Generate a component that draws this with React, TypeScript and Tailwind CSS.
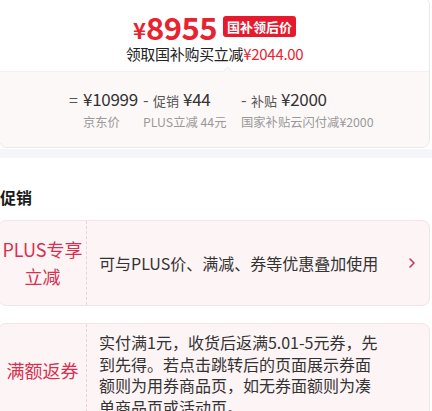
const font = { fontFamily: '"Noto Sans CJK SC", "Noto Sans", sans-serif' };

function PriceCol({ op, label, value, sub, opW, w }: { op: string; label?: string; value: string; sub: string; opW: string; w: string }) {
  return (
    <div className={`flex flex-col ${w}`}>
      <div className="flex items-baseline h-[24px] text-[#333]">
        <span className={`text-[16px] text-[#555] ${opW}`}>{op}</span>
        {label && <span className="text-[13px] text-[#555] mr-[4px]">{label}</span>}
        <span className="text-[17px] tracking-[-0.3px]">{value}</span>
      </div>
      <div className={`text-[12.3px] text-[#999] leading-[20px] mt-[2px] whitespace-nowrap ${opW}`}>{sub}</div>
    </div>
  );
}

export default function App() {
  return (
    <div style={font} className="w-[432px] h-[411px] overflow-hidden bg-white">
      {/* price card */}
      <div className="-ml-px -mt-[3px] w-[431px] border border-[#ebe8e8] rounded-tr-[8px] rounded-b-[8px] overflow-hidden">
        <div className="h-[73px] flex flex-col items-center bg-white">
          <div className="flex items-center mt-[13px] h-[31px]">
            <span className="text-[#e8232f] text-[22px] font-semibold leading-none mt-[4px]">¥</span>
            <span className="text-[#e8232f] text-[31px] font-semibold leading-none tracking-[-0.5px]">8955</span>
            <span className="ml-[6px] bg-[#e8192c] text-white text-[13px] font-bold leading-[21px] px-[4px] rounded-[3px]">国补领后价</span>
          </div>
          <div className="mt-[2px] text-[15px] leading-[20px] text-[#222] tracking-[-0.3px]">
            领取国补购买立减<span className="text-[#e8232f]">¥2044.00</span>
          </div>
        </div>
        <div className="relative h-[76px] bg-[#fdf8f8] border-t border-[#f6eeee] flex pt-[14px] pl-[69px]">
          <div className="absolute -top-[4px] left-[224px] w-[7px] h-[7px] rotate-45 bg-[#fdf8f8] border-l border-t border-[#f6eeee]" />
          <PriceCol op="=" value="¥10999" sub="京东价" opW="pl-[14px] first:pl-0 w-[14px]" w="w-[74px]" />
          <PriceCol op="-" label="促销" value="¥44" sub="PLUS立减 44元" opW="w-[10px]" w="w-[98px]" />
          <PriceCol op="-" label="补贴" value="¥2000" sub="国家补贴云闪付减¥2000" opW="w-[10px]" w="w-[150px]" />
        </div>
      </div>

      <div className="h-[9px] bg-[#f5f6fa] mt-[1px]" />

      <div className="h-[62px] pt-[28px]">
        <h2 className="text-[16px] font-bold leading-[22px] text-[#1a1a1a]">促销</h2>
      </div>

      {/* promo cards */}
      <div className="-ml-[2px] w-[432px] flex flex-col gap-[17px]">
        <div className="flex h-[86px] bg-[#fdf4f5] border border-[#f3e4e7] rounded-[8px]">
          <div className="w-[88px] shrink-0 flex items-center justify-center border-r border-dashed border-[#ead3d8] text-center text-[#d9304f] text-[18px] leading-[27px]">
            PLUS专享<br />立减
          </div>
          <div className="flex-1 flex items-center pl-[12px] text-[16px] text-[#333]">可与PLUS价、满减、券等优惠叠加使用</div>
          <div className="w-[34px] flex items-center justify-center text-[#c8365a]">
            <svg width="8" height="12" viewBox="0 0 8 12" fill="none">
              <path d="M2 2l4 4-4 4" stroke="currentColor" strokeWidth="1.6" strokeLinecap="round" strokeLinejoin="round" />
            </svg>
          </div>
        </div>
        <div className="flex h-[110px] bg-[#fdf4f5] border border-[#f3e4e7] rounded-[8px]">
          <div className="w-[88px] shrink-0 flex items-center justify-center border-r border-dashed border-[#ead3d8] text-[#d9304f] text-[18px] pb-[16px]">
            满额返券
          </div>
          <div className="flex-1 pl-[12px] pr-[48px] pt-[8px] text-[16px] leading-[21.5px] text-[#333]">
            实付满1元，收货后返满5.01-5元券，先到先得。若点击跳转后的页面展示券面额则为用券商品页，如无券面额则为凑单商品页或活动页。
          </div>
        </div>
      </div>
    </div>
  );
}
